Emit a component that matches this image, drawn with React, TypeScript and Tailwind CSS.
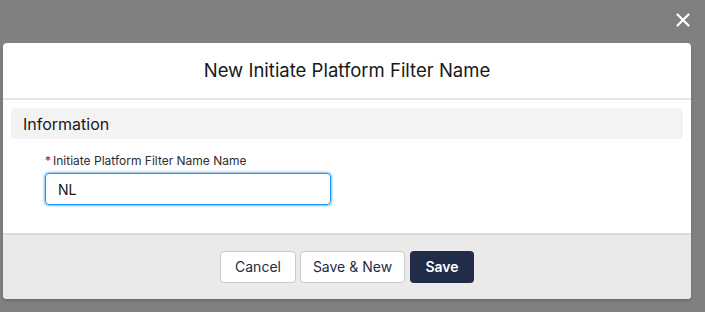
import { X } from 'lucide-react'

const font = { fontFamily: 'Inter, "Noto Sans", sans-serif' }

const App = () => {
  return (
    <div
      className="flex h-[312px] w-[705px] flex-col bg-[#808080] font-['Inter','Noto_Sans',sans-serif]"
      style={font}
    >
      <div className="flex h-[43px] items-start justify-end pr-[11px] pt-[9px]">
        <X className="size-[22px] text-white" strokeWidth={2.5} />
      </div>
      <div className="ml-[3px] flex w-[688px] flex-col overflow-hidden rounded-[4px] bg-white shadow-[0_2px_3px_rgba(0,0,0,0.16)]">
        <div className="flex h-[57px] items-center justify-center border-b-2 border-[#e5e5e5] text-[18.5px] text-[#181818]">
          New Initiate Platform Filter Name
        </div>
        <div className="flex h-[133px] flex-col px-[8px] pt-[8px]">
          <div className="flex h-[31px] items-center rounded-[4px] bg-[#f3f3f3] px-[12px] text-[16px] text-[#181818]">
            Information
          </div>
          <div className="mt-[12px] flex flex-col pl-[34px]">
            <label className="h-[21px] text-[12px] leading-[20px] text-[#2e2e2e]">
              <span className="mr-[2px] text-[#ba0517]">*</span>
              Initiate Platform Filter Name Name
            </label>
            <div className="mt-[1px] flex h-[32px] w-[286px] items-center rounded-[4px] border border-[#1b96ff] px-[12px] text-[14px] text-[#181818] shadow-[0_0_3px_#0176d3]">
              NL
            </div>
          </div>
        </div>
        <div className="flex h-[66px] items-center justify-center gap-[4px] border-t-2 border-[#dddbda] bg-[#ebeae9] pb-[1px]">
          <button className="h-[32px] w-[76px] rounded-[4px] border border-[#c9c9c9] bg-white text-[14px] text-[#1f2a44]">
            Cancel
          </button>
          <button className="h-[32px] w-[105px] rounded-[4px] border border-[#c9c9c9] bg-white text-[14px] text-[#1f2a44]">
            Save &amp; New
          </button>
          <button className="ml-[1px] h-[32px] w-[64px] rounded-[4px] bg-[#202c48] text-[14px] font-semibold text-white">
            Save
          </button>
        </div>
      </div>
    </div>
  )
}

export default App
